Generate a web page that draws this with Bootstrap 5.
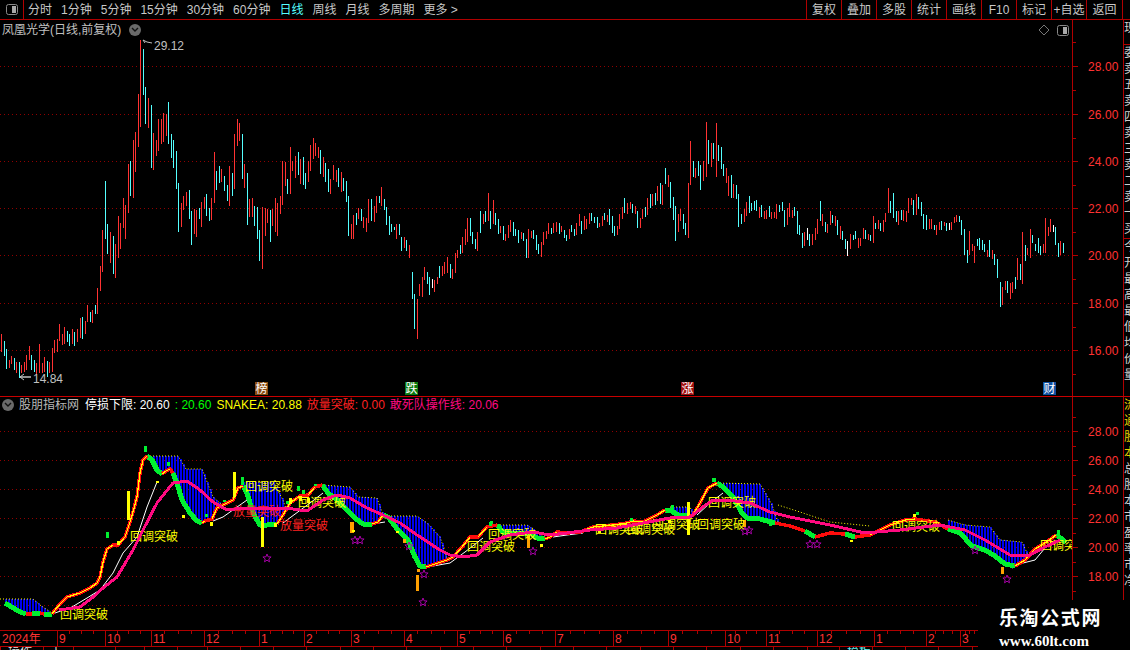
<!DOCTYPE html>
<html lang="en">

<head>
    <meta charset="UTF-8">
    <meta name="viewport" content="width=device-width, initial-scale=1.0">
    <title>凤凰光学 日线</title>
    <link rel="stylesheet" href="https://cdn.jsdelivr.net/npm/bootstrap@5.3.3/dist/css/bootstrap.min.css">
    <style>
        html, body { height: 100%; overflow: hidden; background: #000; }
        body, svg text { font-family: "Liberation Sans", "Noto Sans CJK SC", sans-serif; font-size: 12px; }
        .term { width: 1130px; height: 650px; background: #000; color: #c8c8c8; line-height: 1; }
        .topbar { height: 20px; border-bottom: 1px solid #b00000; }
        .layout-btn { width: 24px; border-right: 1px solid #b00000; }
        .period-list { gap: 9px; padding-left: 4px; }
        .period-on { color: #55ffff; }
        .tool-list { margin-right: 7px; }
        .tool-item { height: 19px; width: 35px; border-left: 1px solid #b00000; }
        .tool-item:last-child { width: 37px; border-right: 1px solid #b00000; }
        .price-row { height: 377px; border-bottom: 1px solid #c80000; }
        .sub-row { height: 233px; }
        .plot { width: 1072px; }
        .axis { width: 51px; }
        .side { width: 7px; border-left: 1px solid #b00000; overflow: hidden; }
        .side-block { width: 13px; color: #d0d0d0; line-height: 16px; word-break: break-all; overflow: hidden; }
        .side-top { height: 25px; border-bottom: 1px solid #b00000; }
        .side-mid { height: 194px; border-bottom: 1px solid #b00000; }
        .side-low { height: 157px; }
        .side-first { color: #e8d000; }
        svg { display: block; }
        .chart-title { top: 4px; left: 2px; color: #c0c0c0; font-size: 12px; }
        .round-btn { width: 12px; height: 12px; border-radius: 50%; background: #6a6a6a; }
        .sub-title { top: 2px; left: 2px; gap: 5px; white-space: nowrap; }
        .sub-name { color: #b8b8b8; margin-right: 1px; }
        .c-white { color: #fff; }
        .c-green { color: #00ff00; }
        .c-yellow { color: #ffff00; }
        .c-red { color: #ff2020; }
        .c-pink { color: #ff0a80; }
        .time-row { height: 17px; border-top: 1px solid #b00000; border-bottom: 1px solid #b00000; }
        .status-row { height: 3px; overflow: hidden; color: #ddd; }
        .status-cell { height: 3px; border-left: 1px solid #b00000; padding-left: 7px; flex: none; overflow: hidden; line-height: 10px; }
        .status-on { color: #66eeee; }
        .mark-box { right: 0; bottom: 0; width: 152px; height: 50px; background: #000; color: #fff; padding: 8px 0 0 21px; }
        .mark-name { font-size: 19px; font-weight: 700; letter-spacing: 1.6px; line-height: 22px; }
        .mark-url { font-family: "Liberation Serif", serif; font-size: 15px; font-weight: 700; line-height: 18px; margin-top: 2px; }
    </style>
</head>

<body>
    <div class="term d-flex flex-column position-relative">
        <!-- top toolbar -->
        <div class="topbar d-flex align-items-center justify-content-between">
            <div class="d-flex align-items-center">
                <div class="layout-btn d-flex justify-content-center align-items-center">
                    <svg width="14" height="19" viewBox="0 0 14 19">
                        <rect x="1.5" y="4.5" width="11" height="10" rx="2" fill="none" stroke="#8a8a8a"></rect>
                        <rect x="7" y="6" width="4" height="7" fill="#a8a8a8"></rect>
                    </svg>
                </div>
                <div class="period-list d-flex">
                    <span>分时</span><span>1分钟</span><span>5分钟</span><span>15分钟</span><span>30分钟</span><span>60分钟</span>
                    <span class="period-on">日线</span><span>周线</span><span>月线</span><span>多周期</span><span>更多 &gt;</span>
                </div>
            </div>
            <div class="tool-list d-flex">
                <div class="tool-item d-flex align-items-center justify-content-center">复权</div>
                <div class="tool-item d-flex align-items-center justify-content-center">叠加</div>
                <div class="tool-item d-flex align-items-center justify-content-center">多股</div>
                <div class="tool-item d-flex align-items-center justify-content-center">统计</div>
                <div class="tool-item d-flex align-items-center justify-content-center">画线</div>
                <div class="tool-item d-flex align-items-center justify-content-center">F10</div>
                <div class="tool-item d-flex align-items-center justify-content-center">标记</div>
                <div class="tool-item d-flex align-items-center justify-content-center">+自选</div>
                <div class="tool-item d-flex align-items-center justify-content-center">返回</div>
            </div>
        </div>

        <!-- price panel -->
        <div class="price-row d-flex">
            <div class="plot position-relative">
                <svg id="priceChart" width="1072" height="376" viewBox="0 20 1072 376"></svg>
                <div class="chart-title position-absolute d-flex align-items-center gap-2">
                    <span>凤凰光学(日线,前复权)</span>
                    <span class="round-btn d-flex align-items-center justify-content-center">
                        <svg width="8" height="6" viewBox="0 0 8 6"><path d="M1 1l3 3 3-3" fill="none" stroke="#111" stroke-width="1.4"></path></svg>
                    </span>
                </div>
            </div>
            <svg id="priceAxis" class="axis" width="51" height="376" viewBox="1072 20 51 376"></svg>
            <div class="side">
                <div class="side-block side-top">现</div>
                <div class="side-block side-mid">委卖五卖四卖三卖二卖一买</div>
                <div class="side-block side-low">今开最高最低均价量</div>
            </div>
        </div>

        <!-- indicator panel -->
        <div class="sub-row d-flex">
            <div class="plot position-relative">
                <svg id="subChart" width="1072" height="233" viewBox="0 397 1072 233"></svg>
                <div class="sub-title position-absolute d-flex align-items-center">
                    <span class="round-btn d-flex align-items-center justify-content-center">
                        <svg width="8" height="6" viewBox="0 0 8 6"><path d="M1 1l3 3 3-3" fill="none" stroke="#111" stroke-width="1.4"></path></svg>
                    </span>
                    <span class="sub-name">股朋指标网</span>
                    <span class="c-white">停损下限: 20.60</span>
                    <span class="c-green">: 20.60</span>
                    <span class="c-yellow">SNAKEA: 20.88</span>
                    <span class="c-red">放量突破: 0.00</span>
                    <span class="c-pink">敢死队操作线: 20.06</span>
                </div>
            </div>
            <svg id="subAxis" class="axis" width="51" height="233" viewBox="1072 397 51 233"></svg>
            <div class="side">
                <div class="side-block side-first">流通股本</div>
                <div class="side-block">总股本市盈率市净</div>
            </div>
        </div>

        <!-- time axis -->
        <div class="time-row">
            <svg id="timeAxis" width="1130" height="15" viewBox="0 631 1130 15"></svg>
        </div>
        <div id="statusRow" class="status-row d-flex"></div>

        <!-- site watermark -->
        <div class="mark-box position-absolute">
            <div class="mark-name">乐淘公式网</div>
            <div class="mark-url">www.60lt.com</div>
        </div>
    </div>

    <script>
        const RED = '#ff3232', CYAN = '#54ffff';

        // daily bars: colour + x,top,bottom in screen pixels
        const bars = `r1,334,352 c4,341,356 c6,349,369 r9,360,368 r11,356,364 c14,358,370 r16,362,373 c19,362,378 r21,365,373 r24,362,372
r26,355,370 r29,346,360 c31,355,370 c34,360,372 r36,363,375 r39,344,373 r42,363,373 r44,357,372 c47,361,377 r49,362,373
r52,348,372 r54,340,353 r57,339,352 r59,324,341 r62,334,345 r64,327,344 c67,331,342 c69,334,346 r72,329,344 c74,332,346
r77,329,342 r80,318,338 c82,317,339 r85,321,334 r87,305,322 c90,312,322 r92,310,323 c95,305,314 r97,288,314 r100,266,291
r102,230,272 c105,181,239 c107,224,254 r110,232,263 c113,236,274 r115,244,278 r118,216,258 r120,223,249 r123,198,228 r125,205,239
r128,164,213 c130,161,196 r133,140,198 r135,132,172 r138,94,147 r140,40,127 c143,49,95 c145,87,124 r148,98,128 c151,105,168
r153,133,170 r156,140,156 r158,119,151 r161,119,144 r163,113,142 r166,114,136 c168,102,144 c171,134,158 c173,140,168 c176,151,189
c178,183,232 r181,203,227 r183,196,210 r186,192,206 c189,190,219 c191,211,245 r194,209,234 r196,210,237 c199,208,219 r201,202,227
r204,197,209 c206,194,216 c209,208,221 r211,198,220 r214,152,203 c216,171,190 c219,166,183 r221,169,182 c224,176,191 c227,185,201
r229,166,206 c232,173,196 r234,134,189 r237,119,146 r239,123,141 c242,134,179 r244,164,188 c247,173,225 r249,199,217 r252,198,217
c254,206,226 c257,207,239 c259,230,261 r262,207,269 r265,208,236 r267,209,223 c270,210,242 r272,209,226 r275,198,232 r277,203,236
r280,196,214 r282,161,205 r285,162,186 c287,179,194 r290,147,194 r292,161,171 r295,156,178 c298,152,175 r300,159,184 c303,157,185
c305,173,189 r308,161,182 r310,145,171 r313,138,159 r315,143,156 r318,147,158 c320,150,174 r323,157,177 c325,163,182 c328,169,192
r330,179,194 r333,165,180 r336,170,182 c338,168,187 r341,172,192 c343,178,191 c346,181,202 c348,196,236 r351,224,239 r353,215,239
c356,213,225 r358,208,219 c361,209,221 r363,217,228 r366,218,232 r368,199,223 c371,199,221 r374,206,222 r376,196,213 c379,196,203
r381,187,206 c384,199,210 c386,207,225 c389,216,235 c391,224,232 c394,227,230 r396,224,239 c399,224,235 c401,237,251 r404,237,248
c406,240,251 r409,245,258 c412,272,299 c414,294,329 r417,299,339 r419,284,296 r422,277,297 r424,267,280 c427,272,284 c429,277,295
w432,279,288 r434,280,292 r437,277,284 c439,266,278 r442,266,276 r444,262,274 r447,257,273 c450,264,278 r452,269,279 r455,253,273
r457,250,258 c460,245,254 r462,237,253 r465,229,245 r467,218,242 c470,218,236 c472,232,244 c475,239,249 r477,232,251 c480,211,233
r483,214,224 c485,211,222 r488,193,221 c490,211,229 r493,200,224 c495,213,225 c498,219,234 r500,226,233 c503,226,240 r505,234,241
r508,225,238 r510,220,232 c513,222,236 c515,229,236 c518,230,243 r521,232,239 c523,233,241 c526,239,258 r528,229,258 r531,231,238
c533,230,239 c536,235,250 c538,244,254 r541,242,257 r543,232,245 r546,231,239 r548,223,234 c551,228,234 r553,223,233 r556,222,232
c559,223,234 r561,226,232 c564,230,238 c566,235,241 r569,229,239 c571,225,232 c574,229,236 r576,223,235 r579,214,226 c581,221,234
r584,216,230 r586,219,229 r589,213,224 c591,213,221 c594,217,223 c597,217,228 r599,223,227 r602,216,226 c604,213,220 r607,215,222
c609,209,225 c612,216,233 c614,226,236 r617,226,235 r619,214,229 r622,207,219 c624,198,213 r627,203,214 r630,202,209 c632,204,213
r635,206,214 c637,211,228 r640,218,228 r642,209,219 c645,207,217 r647,198,215 c650,194,208 r652,194,206 c655,193,205 r657,186,201
c660,183,204 r662,185,205 c665,168,184 r668,175,187 c670,182,208 c673,197,220 c675,206,241 r678,214,232 r680,209,221 c683,214,229
c685,223,235 r688,183,238 r690,141,185 c693,161,177 r695,168,178 c698,161,176 c700,165,190 r703,161,181 r706,122,177 c708,140,164
r711,143,167 c713,143,159 r716,123,177 c718,145,161 c721,147,169 c723,164,176 r726,168,183 r728,176,196 c731,175,198 r733,184,198
c736,185,199 c738,194,227 c741,214,224 r744,209,222 r746,202,216 c749,196,213 c751,203,211 c754,201,210 c756,200,211 r759,207,218
c761,205,217 r764,211,219 r766,210,219 c769,206,217 r771,212,219 r774,212,218 r776,204,219 c779,205,212 c782,202,211 c784,210,227
r787,208,225 r789,203,217 r792,210,218 c794,207,216 c797,211,234 c799,225,235 c802,233,248 r804,232,246 w807,228,240 c809,234,246
r812,234,245 r815,228,240 r817,219,234 c820,201,221 r822,214,226 c825,222,232 r827,224,233 r830,211,225 c832,215,223 r835,216,226
c837,220,235 r840,226,239 c842,231,240 c845,239,249 w847,241,256 r850,234,249 c853,235,240 c855,231,239 r858,238,248 r860,238,246
r863,228,239 c865,230,239 r868,234,240 c870,235,241 r873,216,243 c875,223,229 r878,220,229 c880,223,231 r883,220,232 r885,213,222
r888,188,213 c890,201,213 c893,193,218 c896,211,222 r898,211,225 c901,210,220 r903,210,221 r906,211,222 r908,198,213 r911,198,205
c913,200,215 r916,194,215 c918,197,209 c921,202,216 c923,214,229 c926,215,230 r929,219,229 r931,219,229 c934,225,230 r936,225,235
r939,222,230 c941,221,230 r944,222,226 c946,223,231 w949,223,230 r951,222,230 r954,217,223 r956,215,222 c959,216,222 c961,220,235
c964,229,255 c967,250,263 r969,231,255 r972,244,251 r974,246,263 c977,239,246 c979,238,250 c982,240,250 c984,244,252 r987,250,257
c989,240,257 r992,250,259 c994,254,265 c997,259,278 c1000,282,307 r1002,287,305 r1005,281,290 c1007,281,293 r1010,283,299 r1012,282,293
c1015,277,289 r1017,258,280 c1020,264,280 r1022,232,284 c1025,245,261 r1027,248,255 r1030,229,258 c1032,235,243 c1035,244,251 c1038,238,253
c1040,246,255 r1043,244,253 r1045,218,253 r1048,227,236 r1050,219,232 w1053,225,232 c1055,227,245 c1058,243,257 r1060,241,255 c1063,243,253`;

        // SNAKE line: colour switches at each letter
        const snake = `g 5,603 20,612 26,614 r 32,614 g 40,613 r 44,614 g 52,614 r 55,610 60,604 67,597 80,593 90,588 97,583 100,577 103,562 107,549 113,545 118,545
125,537 130,522 133,512 137,497 140,473 143,460 147,456 g 152,460 157,470 162,474 r 166,471 170,469 173,473 g 177,483 182,500 190,513 197,521 202,523
r 205,521 212,519 217,508 223,505 233,500 238,488 243,486 g 247,493 253,513 260,525 267,525 277,524 r 283,515 290,503 300,496 308,495 315,487 322,485
g 328,493 337,500 347,510 355,518 363,524 372,524 r 378,522 383,515 g 388,517 398,530 408,540 415,557 420,566 426,567 r 447,560 453,557 462,547 470,537 478,537 487,527 497,525
g 503,532 510,533 520,533 530,533 537,538 545,539 r 550,537 557,532 567,533 580,532 593,527 613,525 627,523 633,521 643,522 657,515 665,510 g 670,510 678,515 688,516
r 693,515 700,503 708,488 717,483 g 723,487 733,497 742,513 747,518 760,519 775,523 r 790,526 805,531 g 815,537 r 830,533 845,534 g 855,537 r 870,535 880,530 890,525 905,520 915,519 935,522 948,529
g 960,533 972,546 985,550 995,556 1005,564 1015,566 r 1025,560 1035,549 1048,541 1056,535 g 1062,539 1066,543`;

        const pink = [[59,610],[80,607],[93,597],[103,588],[117,577],[133,550],[143,530],[157,503],[173,483],[187,481],[200,490],[213,502],[227,510],[243,508],[267,508],[293,509],[307,511],[323,500],[337,495],[350,498],[367,508],[383,515],[400,523],[417,535],[440,550],[450,555],[463,557],[477,555],[490,542],[510,535],[533,532],[550,535],[567,533],[590,530],[617,528],[643,523],[670,518],[690,517],[703,507],[713,500],[727,500],[750,503],[770,512],[790,517],[830,525],[865,533],[900,530],[940,525],[965,530],[985,540],[1010,555],[1030,555],[1045,547],[1060,540]];

        const whiteRuns = [
            [[55,613],[72,607],[87,598],[100,590],[113,573],[123,553],[137,537],[147,507],[157,482]],
            [[213,521],[223,517],[247,500]],
            [[283,523],[310,503],[323,493]],
            [[372,524],[385,522]],
            [[433,566],[450,563],[465,552],[483,538]],
            [[553,537],[567,535],[583,533]],
            [[697,515],[710,503],[723,493]],
            [[1012,568],[1023,563],[1035,560],[1045,548]]
        ];

        // yellow stepped upper band, hatch = fill down to the SNAKE line
        const bands = [
            { hatch: true, pts: [[0,599],[33,599],[40,605],[52,613]] },
            { hatch: true, pts: [[147,456],[178,456],[186,469],[202,469],[213,497],[222,505]] },
            { hatch: true, pts: [[243,482],[273,482],[283,500],[287,512]] },
            { hatch: true, pts: [[322,485],[350,487],[358,497],[377,498],[383,515]] },
            { hatch: true, pts: [[388,516],[417,516],[427,523],[440,537],[447,558]] },
            { hatch: true, pts: [[497,525],[527,525],[537,532],[545,538]] },
            { hatch: true, pts: [[670,507],[690,507],[693,514]] },
            { hatch: true, pts: [[717,483],[760,484],[772,505],[778,522]] },
            { hatch: false, pts: [[778,505],[800,512],[830,522],[870,526]] },
            { hatch: true, pts: [[948,520],[965,525],[990,527],[1000,540],[1022,542],[1028,555]] }
        ];

        // x,y,w,h
        const greenDots = [[144,446,3,6],[106,532,3,6],[167,462,3,4],[241,477,3,8],[297,486,3,5],[302,490,3,4],[314,484,3,2],[205,514,3,3],[223,500,3,2],[286,501,4,3],[490,521,3,3],[489,522,3,4],[671,505,3,4],[712,478,4,4],[1057,530,3,5],[916,512,3,3],[630,518,3,3],[769,523,3,3]];
        const yellowDots = [[156,481,3,2],[182,515,3,3],[210,522,3,4],[274,523,3,4],[117,541,3,4],[228,508,3,3],[289,498,3,6],[299,496,3,5],[307,498,3,5],[396,531,3,2],[540,544,3,3],[352,530,3,2],[598,530,3,3],[668,520,3,3],[850,540,3,2],[913,514,3,3],[1050,541,3,3]];
        const yellowBars = [[127,491,3,29],[233,472,3,25],[261,517,3,30],[687,502,3,33]];
        const orangeBars = [[416,575,3,16],[350,522,4,11],[403,539,3,4],[417,569,3,3],[527,535,3,13],[743,520,3,7],[1001,567,3,7]];
        const stars = [[267,558],[355,540],[360,540],[409,546],[424,574],[423,602],[533,551],[745,531],[749,530],[810,544],[817,544],[975,550],[1007,579]];

        const labels = [
            ['回调突破',60,615,'#ffff00'],['回调突破',130,537,'#ffff00'],['回调突破',245,487,'#ffff00'],['回调突破',298,503,'#ffff00'],
            ['放量突破',233,512,'#ff2020'],['放量突破',280,526,'#ff2020'],
            ['回调突破',467,547,'#ffff00'],['回调突破',488,535,'#ffff00'],['回调突破',595,530,'#ffff00'],['回调突破',627,530,'#ffff00'],
            ['回调突破',652,525,'#ffff00'],['回调突破',697,525,'#ffff00'],['回调突破',708,503,'#ffff00'],['回调突破',892,527,'#ffff00'],['回调突破',1040,546,'#ffff00']
        ];

        const tags = [['榜',255,'#8a4a10'],['跌',405,'#0a7a10'],['涨',681,'#a01010'],['财',1043,'#0f4f9f']];
        const months = [['9',57],['10',105],['11',151],['12',204],['1',259],['2',304],['3',351],['4',404],['5',457],['6',503],['7',555],['8',613],['9',668],['10',725],['11',766],['12',817],['1',874],['2',926],['3',960]];

        const rect = (x, y, w, h, fill) => `<rect x="${x}" y="${y}" width="${w}" height="${h}" fill="${fill}" shape-rendering="crispEdges"></rect>`;
        const line = (pts, color, width, extra = '') => `<polyline points="${pts.map(p => p.join(',')).join(' ')}" fill="none" stroke="${color}" stroke-width="${width}" stroke-linejoin="round" ${extra}></polyline>`;
        const text = (s, x, y, fill, extra = '') => `<text x="${x}" y="${y}" fill="${fill}" ${extra}>${s}</text>`;
        const gridLine = y => `<line x1="0" x2="1072" y1="${y}.5" y2="${y}.5" stroke="#900000" stroke-dasharray="1 3" shape-rendering="crispEdges"></line>`;
        const CRISP = 'shape-rendering="crispEdges"';

        // interpolate a polyline at x
        function yAt(pts, x) {
            for (let i = 1; i < pts.length; i++) {
                if (x <= pts[i][0]) {
                    const [x0, y0] = pts[i - 1], [x1, y1] = pts[i];
                    return y0 + (y1 - y0) * (x - x0) / (x1 - x0 || 1);
                }
            }
            return pts[pts.length - 1][1];
        }

        // price panel
        let html = [66, 114, 161, 208, 255, 303, 350].map(gridLine).join('');
        const barColor = { r: RED, c: CYAN, w: '#ffffff' };
        bars.trim().split(/\s+/).forEach(b => {
            const [x, t, e] = b.slice(1).split(',').map(Number);
            html += rect(x, t, 1, e - t, barColor[b[0]]);
        });
        html += line([[152, 43], [147, 42], [143, 40], [145, 43]], '#c0c0c0', 1);
        html += line([[24, 374], [20, 377], [31, 377], [20, 377], [24, 380]], '#c0c0c0', 1);
        html += text('29.12', 154, 50, '#c0c0c0');
        html += text('14.84', 33, 383, '#c0c0c0');
        tags.forEach(([s, x, bg]) => {
            html += rect(x, 382, 13, 13, bg) + text(s, x + 0.5, 393, '#ffffff');
        });
        html += `<path d="M1044 25l5 5-5 5-5-5z" fill="none" stroke="#777"></path>`;
        html += `<rect x="1057.5" y="25.5" width="11" height="10" rx="2" fill="none" stroke="#888"></rect>` + rect(1063, 27, 4, 7, '#a8a8a8');
        document.getElementById('priceChart').innerHTML = html;

        // axes share the same drawing
        function drawAxis(id, top, bottom, prices) {
            let a = `<line x1="1072.5" x2="1072.5" y1="${top}" y2="${bottom}" stroke="#b00000"></line>`;
            prices.forEach(([label, y], i) => {
                a += rect(1073, y, 5, 1, '#b00000');
                a += text(label, 1088, y + 5, RED, 'letter-spacing="0.1"');
                const half = i + 1 < prices.length ? (y + prices[i + 1][1]) / 2 : y + (y - prices[i - 1][1]) / 2;
                if (half < bottom) a += rect(1073, Math.round(half), 3, 1, '#b00000');
                const up = i === 0 ? y - (prices[1][1] - y) / 2 : 0;
                if (up > top) a += rect(1073, Math.round(up), 3, 1, '#b00000');
            });
            document.getElementById(id).innerHTML = a;
        }
        drawAxis('priceAxis', 20, 396, [['28.00', 66], ['26.00', 114], ['24.00', 161], ['22.00', 208], ['20.00', 255], ['18.00', 303], ['16.00', 350]]);
        drawAxis('subAxis', 397, 630, [['28.00', 431], ['26.00', 460], ['24.00', 489], ['22.00', 518], ['20.00', 547], ['18.00', 576]]);

        // indicator panel
        const runs = [];
        let allPts = [], cur = null;
        snake.trim().split(/\s+/).forEach(tok => {
            if (tok === 'r' || tok === 'g') {
                const last = cur ? cur.pts[cur.pts.length - 1] : null;
                cur = { color: tok, pts: last ? [last] : [] };
                runs.push(cur);
            } else {
                const p = tok.split(',').map(Number);
                cur.pts.push(p);
                allPts.push(p);
            }
        });

        let sub = [431, 460, 489, 518, 547, 576, 605].map(gridLine).join('');
        bands.forEach(b => {
            if (b.hatch) {
                const x0 = Math.max(b.pts[0][0], 5), x1 = b.pts[b.pts.length - 1][0];
                for (let x = x0; x <= x1; x += 3) {
                    const top = yAt(b.pts, x), bot = yAt(allPts, x);
                    if (bot > top) sub += rect(Math.round(x), Math.round(top), 2, Math.round(bot - top), '#0000ee');
                }
            }
            sub += line(b.pts, '#ffff00', 1, 'stroke-dasharray="1 2"');
        });
        whiteRuns.forEach(w => { sub += line(w, '#ffffff', 1); });
        runs.forEach(r => {
            if (r.color === 'g') sub += line(r.pts, '#00f030', 5, CRISP);
        });
        runs.forEach(r => {
            if (r.color !== 'r') return;
            sub += line(r.pts, '#ff0c0c', 3.5, CRISP);
            // yellow core only on the steep rises and the flat run mid chart
            for (let i = 1; i < r.pts.length; i++) {
                const [x0, y0] = r.pts[i - 1], [x1, y1] = r.pts[i];
                const steep = (y0 - y1) / (x1 - x0) > 0.3;
                const flatRun = (x1 > 590 && x1 < 660) || (x1 > 880 && x1 < 930);
                if (steep || flatRun) sub += line([r.pts[i - 1], r.pts[i]], '#ffff00', 1.2, CRISP);
            }
        });
        orangeBars.forEach(([x, y, w, h]) => { sub += rect(x, y, w, h, '#ffa000'); });
        yellowBars.forEach(([x, y, w, h]) => { sub += rect(x, y, w, h, '#ffff00'); });
        greenDots.forEach(([x, y, w, h]) => { sub += rect(x, y, w, h, '#00f030'); });
        yellowDots.forEach(([x, y, w, h]) => { sub += rect(x, y, w, h, '#ffff00'); });
        labels.forEach(([s, x, y, c]) => { sub += text(s, x, y + 4, c); });
        sub += line(pink, '#ff0a80', 3, CRISP);
        stars.forEach(([x, y]) => {
            sub += `<path d="M${x} ${y - 4}l1.1 2.8 3 .2-2.3 1.9.7 2.9-2.5-1.6-2.5 1.6.7-2.9-2.3-1.9 3-.2z" fill="none" stroke="#a800a8" stroke-width="1"></path>`;
        });
        document.getElementById('subChart').innerHTML = sub;

        // time axis
        let t = text('2024年', 2, 643, RED);
        months.forEach(([m, x], i) => {
            t += rect(x, 631, 1, 15, '#b00000') + text(m, x + 2, 643, RED);
            const next = i + 1 < months.length ? months[i + 1][1] : 978;
            for (let k = 1; k < 4; k++) t += rect(Math.round(x + (next - x) * k / 4), 631, 1, 3, '#b00000');
        });
        document.getElementById('timeAxis').innerHTML = t;

        // cut-off tab strip at the very bottom, separators at these x
        const seps = [0, 43, 73, 115, 144, 177, 207, 240, 273, 306, 340, 373, 406, 440, 473, 506, 540, 573, 606, 640, 673, 706, 740, 773, 807, 839, 872, 905, 938, 972];
        document.getElementById('statusRow').innerHTML = seps.map((x, i) => {
            const w = (seps[i + 1] || 1130) - x;
            const label = x === 0 ? '操作' : x === 43 ? '卜' : x === 839 ? '模板' : '';
            return `<div class="status-cell${x === 839 ? ' status-on' : ''}" style="width:${w}px">${label}</div>`;
        }).join('');
    </script>

    <script src="https://cdn.jsdelivr.net/npm/bootstrap@5.3.3/dist/js/bootstrap.bundle.min.js"></script>
</body>

</html>
